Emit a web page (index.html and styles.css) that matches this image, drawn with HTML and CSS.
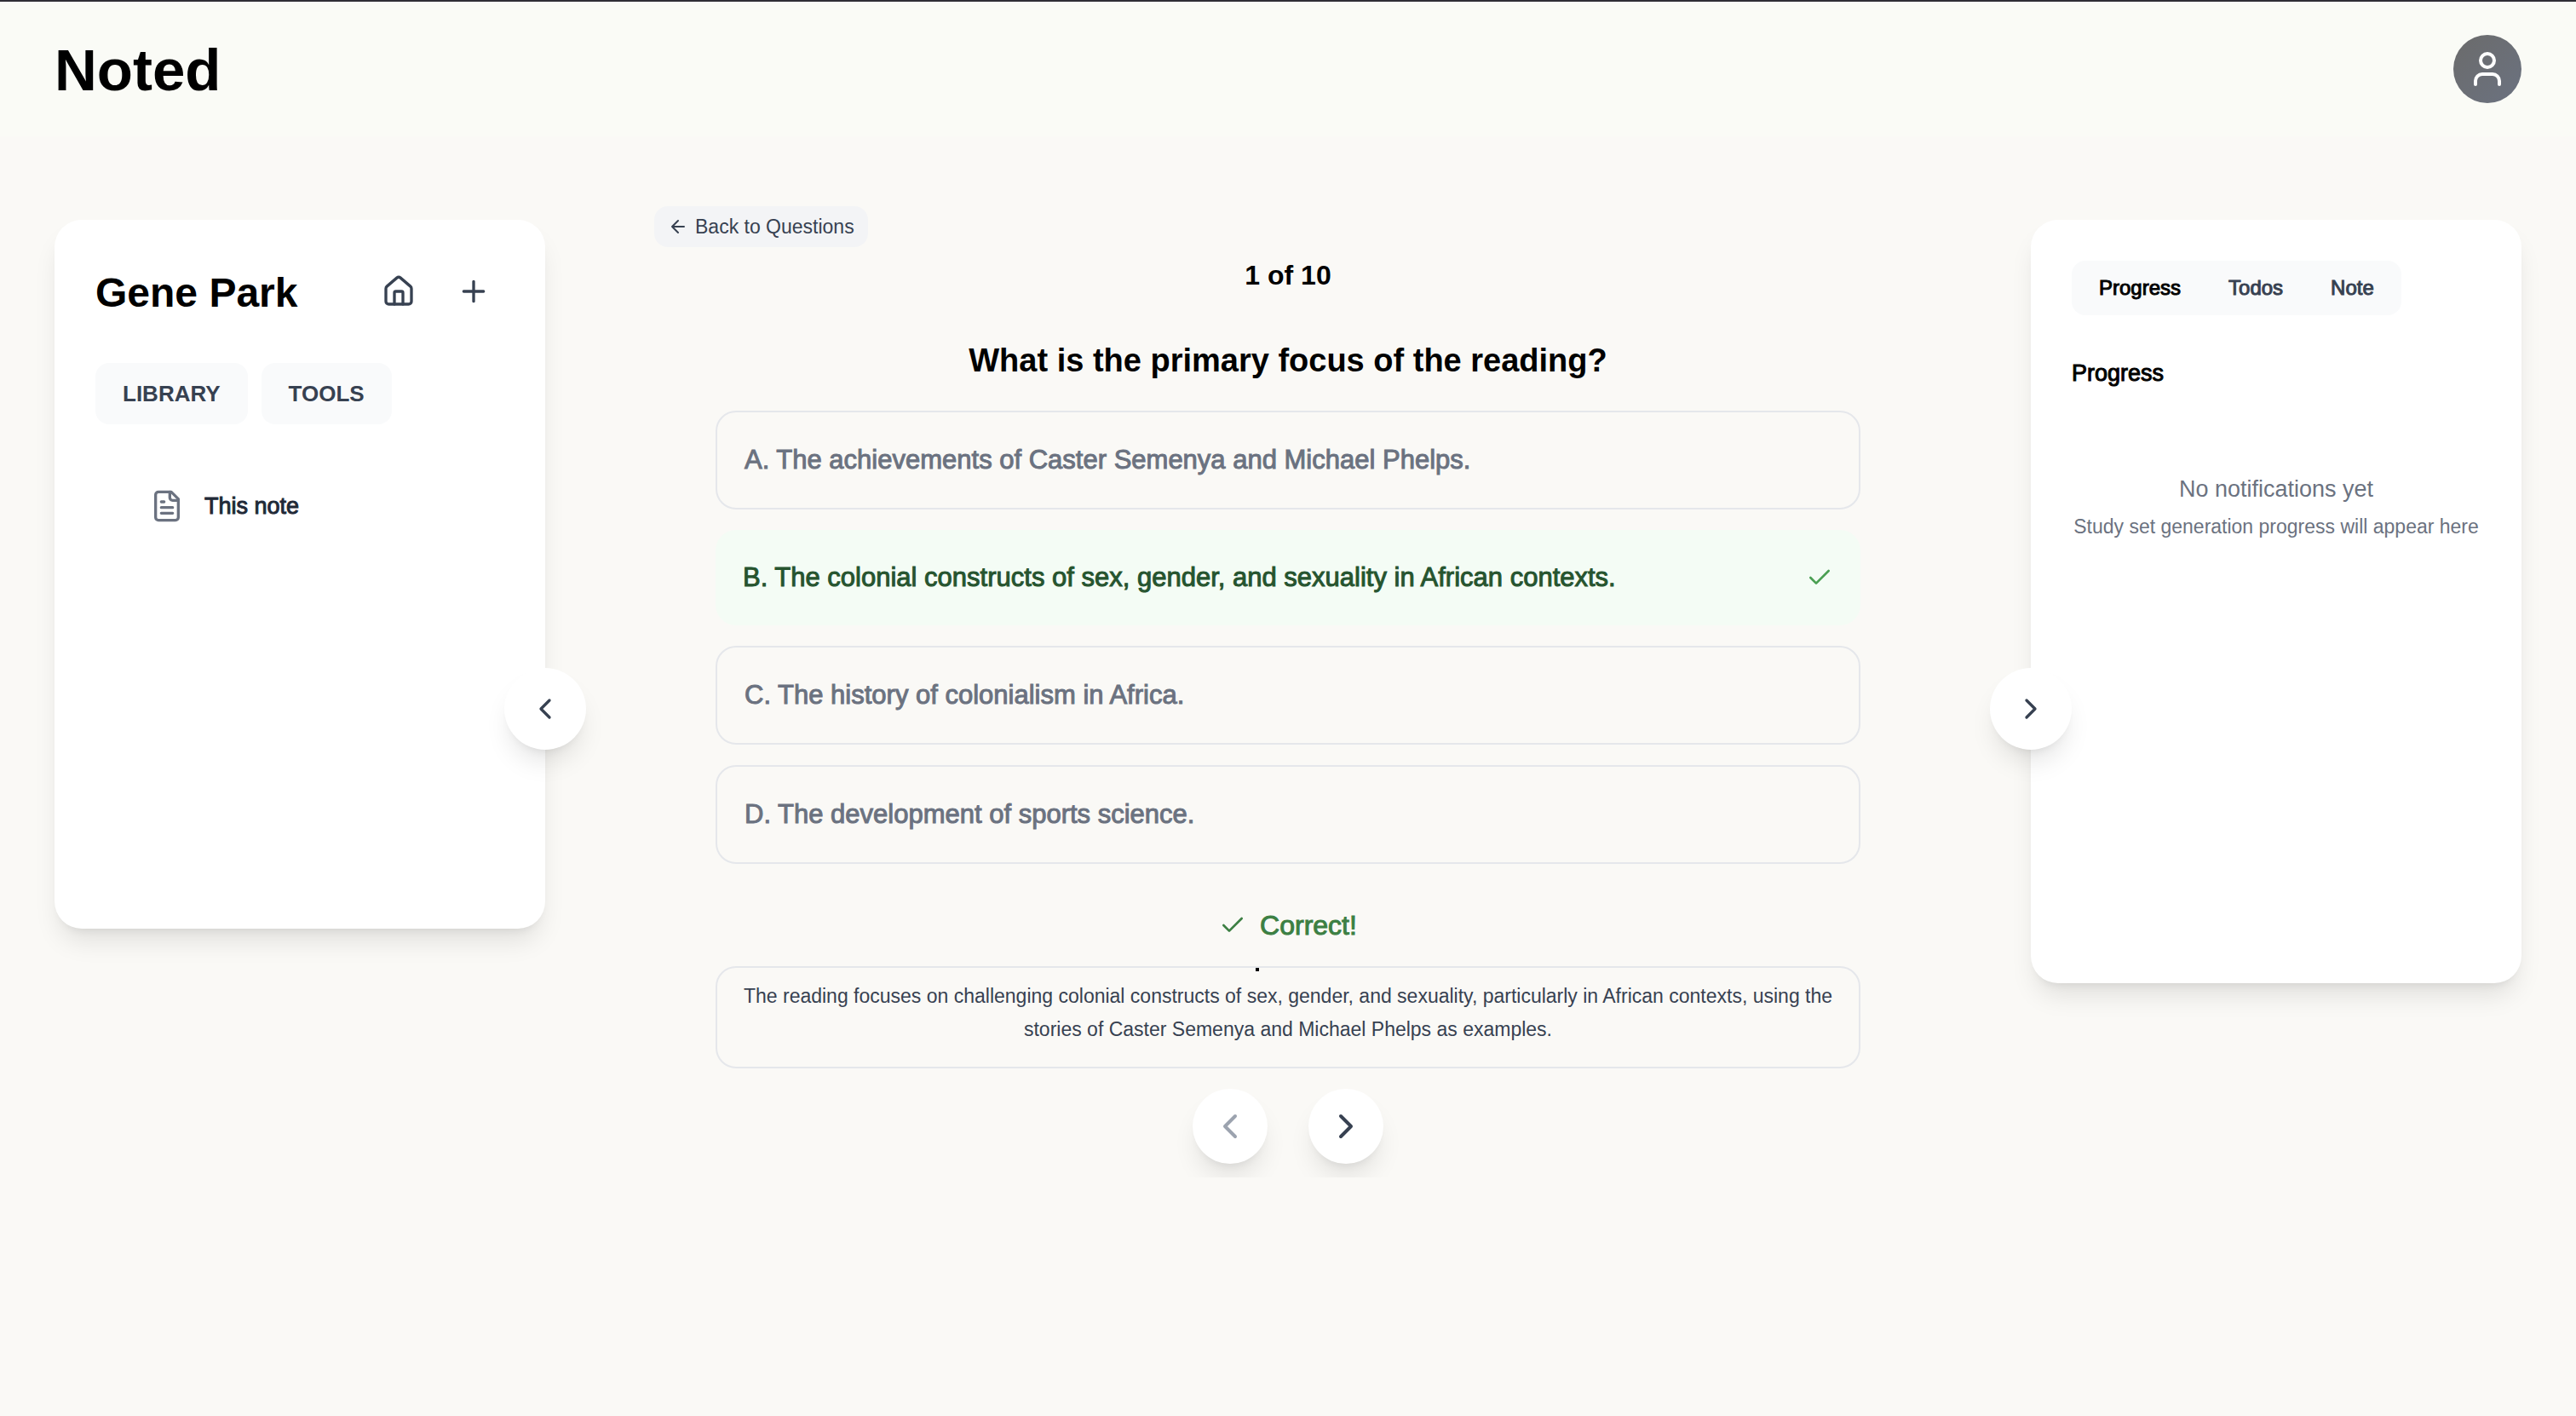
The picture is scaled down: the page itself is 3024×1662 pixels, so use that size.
FILE: index.html
```html
<!DOCTYPE html>
<html lang="en">
<head>
  <meta charset="utf-8">
  <meta name="viewport" content="width=device-width, initial-scale=1">
  <title>Noted</title>
  <link rel="stylesheet" href="styles.css">
</head>
<body>
  <header class="topbar">
    <a class="brand" href="#">Noted</a>
    <button class="avatar" type="button" aria-label="Account">
      <svg class="icon icon-lg" viewBox="0 0 24 24"><path d="M19 21v-2a4 4 0 0 0-4-4H9a4 4 0 0 0-4 4v2"/><circle cx="12" cy="7" r="4"/></svg>
    </button>
  </header>

  <div class="layout">
    <aside class="card library">
      <div class="card-head">
        <h2 class="owner">Gene Park</h2>
        <div class="head-actions">
          <button class="icon-button" type="button" aria-label="Home">
            <svg class="icon" viewBox="0 0 24 24"><path d="M15 21v-8a1 1 0 0 0-1-1h-4a1 1 0 0 0-1 1v8"/><path d="M3 10a2 2 0 0 1 .709-1.528l7-5.999a2 2 0 0 1 2.582 0l7 5.999A2 2 0 0 1 21 10v9a2 2 0 0 1-2 2H5a2 2 0 0 1-2-2z"/></svg>
          </button>
          <button class="icon-button" type="button" aria-label="Add">
            <svg class="icon" viewBox="0 0 24 24"><path d="M5 12h14M12 5v14"/></svg>
          </button>
        </div>
      </div>
      <div class="sections">
        <button class="section-button" type="button">LIBRARY</button>
        <button class="section-button" type="button">TOOLS</button>
      </div>
      <a class="note-link" href="#">
        <svg class="icon" viewBox="0 0 24 24"><path d="M15 2H6a2 2 0 0 0-2 2v16a2 2 0 0 0 2 2h12a2 2 0 0 0 2-2V7z"/><path d="M14 2v4a2 2 0 0 0 2 2h4M10 9H8M16 13H8M16 17H8"/></svg>
        <span class="medium">This note</span>
      </a>
      <button class="round toggle toggle-left" type="button" aria-label="Collapse left panel">
        <svg class="icon" viewBox="0 0 24 24"><path d="m15 18-6-6 6-6"/></svg>
      </button>
    </aside>

    <main class="quiz">
      <button class="back" type="button">
        <svg class="icon icon-xs" viewBox="0 0 24 24"><path d="m12 19-7-7 7-7M19 12H5"/></svg>
        Back to Questions
      </button>
      <div class="quiz-body">
        <p class="counter">1 of 10</p>
        <h1 class="question">What is the primary focus of the reading?</h1>
        <div class="options">
          <button class="option medium" type="button">A. The achievements of Caster Semenya and Michael Phelps.</button>
          <button class="option option-correct medium" type="button">
            B. The colonial constructs of sex, gender, and sexuality in African contexts.
            <svg class="icon icon-sm" viewBox="0 0 24 24"><path d="M20 6 9 17l-5-5"/></svg>
          </button>
          <button class="option medium" type="button">C. The history of colonialism in Africa.</button>
          <button class="option medium" type="button">D. The development of sports science.</button>
        </div>
        <p class="verdict medium">
          <svg class="icon icon-sm" viewBox="0 0 24 24"><path d="M20 6 9 17l-5-5"/></svg>
          Correct!
        </p>
        <p class="explanation">The reading focuses on challenging colonial constructs of sex, gender, and sexuality, particularly in African contexts, using the stories of Caster Semenya and Michael Phelps as examples.</p>
        <nav class="pager" aria-label="Questions">
          <button class="round" type="button" disabled aria-label="Previous question">
            <svg class="icon icon-lg" viewBox="0 0 24 24"><path d="m15 18-6-6 6-6"/></svg>
          </button>
          <button class="round" type="button" aria-label="Next question">
            <svg class="icon icon-lg" viewBox="0 0 24 24"><path d="m9 18 6-6-6-6"/></svg>
          </button>
        </nav>
      </div>
    </main>

    <aside class="card activity">
      <button class="round toggle toggle-right" type="button" aria-label="Collapse right panel">
        <svg class="icon" viewBox="0 0 24 24"><path d="m9 18 6-6-6-6"/></svg>
      </button>
      <div class="tabs" role="tablist">
        <button class="tab tab-active medium" type="button" role="tab" aria-selected="true">Progress</button>
        <button class="tab medium" type="button" role="tab" aria-selected="false">Todos</button>
        <button class="tab medium" type="button" role="tab" aria-selected="false">Note</button>
      </div>
      <h2 class="activity-title medium">Progress</h2>
      <div class="empty">
        <p class="empty-title">No notifications yet</p>
        <p class="empty-text">Study set generation progress will appear here</p>
      </div>
    </aside>
  </div>
</body>
</html>
```
FILE: styles.css
```css
* {
  box-sizing: border-box;
  margin: 0;
}

body {
  min-height: 100vh;
  background: #faf9f6;
  color: #000;
  font-family: "Liberation Sans", Arial, Helvetica, sans-serif;
  font-size: 24px;
  line-height: 32px;
}

button {
  padding: 0;
  border: 0;
  background: none;
  color: inherit;
  font: inherit;
  cursor: pointer;
}

a {
  color: inherit;
  text-decoration: none;
}

/* Liberation Sans has no 500 weight, so medium text gets a thin outline. */
.medium {
  -webkit-text-stroke: 1px currentColor;
}

.icon {
  display: block;
  flex: none;
  width: 40px;
  height: 40px;
  fill: none;
  stroke: currentColor;
  stroke-width: 2;
  stroke-linecap: round;
  stroke-linejoin: round;
}

.icon-lg { width: 48px; height: 48px; }
.icon-sm { width: 32px; height: 32px; }
.icon-xs { width: 24px; height: 24px; }

/* Header */

.topbar {
  display: flex;
  align-items: center;
  justify-content: space-between;
  height: 160px;
  padding: 0 64px;
  border-top: 2px solid #2f2e35;
  background: #fafbf6;
}

.brand {
  padding-top: 4px;
  font-size: 69px;
  font-weight: 700;
  line-height: 80px;
}

.avatar {
  display: grid;
  place-items: center;
  width: 80px;
  height: 80px;
  border-radius: 50%;
  background: linear-gradient(135deg, #6b6b6b, #6b7280);
  color: #fff;
}

/* Page grid */

.layout {
  display: grid;
  grid-template-columns: 576px minmax(0, 1fr) 576px;
  align-items: start;
  padding: 82px 64px 64px;
}

.card {
  position: relative;
  margin-top: 16px;
  padding: 48px;
  border-radius: 32px;
  background: #fff;
  box-shadow: 0 20px 30px -6px rgb(0 0 0 / 10%), 0 8px 12px -8px rgb(0 0 0 / 10%);
}

.library { min-height: 832px; }
.activity { min-height: 896px; }

.round {
  display: grid;
  place-items: center;
  width: 88px;
  height: 88px;
  border-radius: 50%;
  background: #fff;
  color: #374151;
  box-shadow: 0 20px 30px -6px rgb(0 0 0 / 10%), 0 8px 12px -8px rgb(0 0 0 / 10%);
}

.round:disabled {
  color: #9ca3af;
  cursor: default;
}

.toggle {
  position: absolute;
  top: 526px;
  width: 96px;
  height: 96px;
}

.toggle-left { right: -48px; }
.toggle-right { left: -48px; }

/* Left panel */

.card-head {
  display: flex;
  align-items: center;
  justify-content: space-between;
  height: 72px;
  padding-right: 16px;
}

.owner {
  padding-top: 4px;
  font-size: 48px;
  line-height: 56px;
}

.head-actions {
  display: flex;
  gap: 48px;
  color: #374151;
}

.sections {
  display: flex;
  gap: 16px;
  margin-top: 48px;
}

.section-button {
  height: 72px;
  padding: 0 32px;
  border-radius: 16px;
  background: #f9fafb;
  color: #374151;
  font-size: 26px;
  font-weight: 700;
}

.note-link {
  display: flex;
  align-items: center;
  gap: 24px;
  margin-top: 76px;
  padding-left: 64px;
  color: #6b7280;
  font-size: 27px;
  line-height: 40px;
}

.note-link span { color: #1f2937; }

/* Quiz */

.quiz { padding: 0 128px; }

.back {
  display: flex;
  align-items: center;
  gap: 8px;
  height: 48px;
  padding: 0 16px;
  border-radius: 16px;
  background: #f3f4f6;
  color: #374151;
  font-size: 23px;
}

.quiz-body {
  display: flex;
  flex-direction: column;
  max-width: 1376px;
  margin: 0 auto;
  padding: 0 16px 16px;
  overflow: hidden;
}

.counter {
  margin-top: 9px;
  font-size: 32px;
  font-weight: 700;
  line-height: 48px;
  text-align: center;
}

.question {
  margin-top: 48px;
  font-size: 38px;
  line-height: 56px;
  text-align: center;
}

.options {
  display: grid;
  gap: 24px;
  margin-top: 31px;
}

.option {
  display: flex;
  align-items: center;
  justify-content: space-between;
  min-height: 116px;
  padding: 0 32px;
  border: 2px solid #e5e7eb;
  border-radius: 24px;
  color: #6b7280;
  font-size: 31px;
  line-height: 48px;
  text-align: left;
}

.option-correct {
  min-height: 112px;
  border: 0;
  background: #f4fcf5;
  color: #26542f;
}

.option-correct .icon { color: #4a9f52; }

.verdict {
  display: flex;
  align-items: center;
  justify-content: center;
  gap: 16px;
  margin-top: 48px;
  color: #3c7f43;
  font-size: 32px;
  line-height: 48px;
}

.explanation {
  position: relative;
  margin-top: 24px;
  padding: 14px 24px 24px;
  border: 2px solid #e5e7eb;
  border-radius: 24px;
  color: #374151;
  font-size: 23px;
  line-height: 39px;
  text-align: center;
}

.explanation::before {
  content: "";
  position: absolute;
  top: 0;
  left: 632px;
  width: 4px;
  height: 4px;
  background: #000;
}

.pager {
  display: flex;
  justify-content: center;
  gap: 48px;
  margin-top: 24px;
}

/* Right panel */

.tabs {
  display: inline-flex;
  gap: 8px;
  height: 64px;
  padding: 0 8px;
  border-radius: 16px;
  background: #f9fafb;
}

.tab {
  padding: 0 24px;
  color: #374151;
}

.tab-active { color: #000; }

.activity-title {
  margin-top: 48px;
  font-size: 27px;
  font-weight: 400;
  line-height: 40px;
}

.empty {
  margin-top: 96px;
  color: #6b7280;
  text-align: center;
}

.empty-title {
  font-size: 27px;
  line-height: 40px;
}

.empty-text {
  margin-top: 8px;
  font-size: 23px;
}
```
